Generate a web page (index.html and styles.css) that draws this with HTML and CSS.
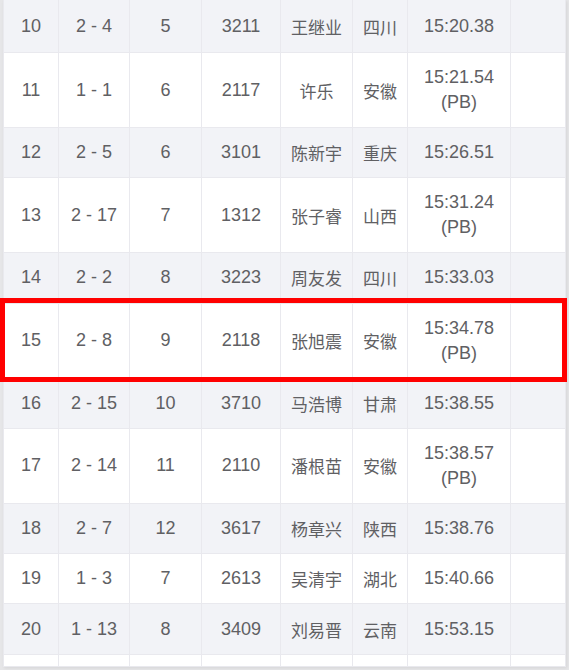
FILE: index.html
```html
<!DOCTYPE html>
<html lang="zh">
<head>
<meta charset="utf-8">
<title>成绩</title>
<link rel="stylesheet" href="styles.css">
</head>
<body>
<div class="page">
  <table class="results">
    <colgroup>
      <col class="c1"><col class="c2"><col class="c3"><col class="c4"><col class="c5"><col class="c6"><col class="c7"><col class="c8">
    </colgroup>
    <tbody>
      <tr class="single top"><td>10</td><td>2 - 4</td><td>5</td><td>3211</td><td>王继业</td><td>四川</td><td>15:20.38</td><td></td></tr>
      <tr class="double"><td>11</td><td>1 - 1</td><td>6</td><td>2117</td><td>许乐</td><td>安徽</td><td>15:21.54<br>(PB)</td><td></td></tr>
      <tr class="single"><td>12</td><td>2 - 5</td><td>6</td><td>3101</td><td>陈新宇</td><td>重庆</td><td>15:26.51</td><td></td></tr>
      <tr class="double"><td>13</td><td>2 - 17</td><td>7</td><td>1312</td><td>张子睿</td><td>山西</td><td>15:31.24<br>(PB)</td><td></td></tr>
      <tr class="single"><td>14</td><td>2 - 2</td><td>8</td><td>3223</td><td>周友发</td><td>四川</td><td>15:33.03</td><td></td></tr>
      <tr class="double hl"><td>15</td><td>2 - 8</td><td>9</td><td>2118</td><td>张旭震</td><td>安徽</td><td>15:34.78<br>(PB)</td><td></td></tr>
      <tr class="single"><td>16</td><td>2 - 15</td><td>10</td><td>3710</td><td>马浩博</td><td>甘肃</td><td>15:38.55</td><td></td></tr>
      <tr class="double"><td>17</td><td>2 - 14</td><td>11</td><td>2110</td><td>潘根苗</td><td>安徽</td><td>15:38.57<br>(PB)</td><td></td></tr>
      <tr class="single"><td>18</td><td>2 - 7</td><td>12</td><td>3617</td><td>杨章兴</td><td>陕西</td><td>15:38.76</td><td></td></tr>
      <tr class="single"><td>19</td><td>1 - 3</td><td>7</td><td>2613</td><td>吴清宇</td><td>湖北</td><td>15:40.66</td><td></td></tr>
      <tr class="single"><td>20</td><td>1 - 13</td><td>8</td><td>3409</td><td>刘易晋</td><td>云南</td><td>15:53.15</td><td></td></tr>
      <tr class="stub"><td></td><td></td><td></td><td></td><td></td><td></td><td></td><td></td></tr>
    </tbody>
  </table>
  <div class="mark"></div>
</div>
</body>
</html>
```

FILE: styles.css
```css
html, body {
  margin: 0;
  padding: 0;
}
body {
  background: #e6e6e8;
  width: 569px;
  height: 670px;
  overflow: hidden;
}
.page {
  position: relative;
  padding: 0 4px 0 3px;
  height: 670px;
  box-sizing: border-box;
}
.results {
  width: 562px;
  border-collapse: collapse;
  table-layout: fixed;
  background: #ffffff;
  font-family: "Liberation Sans", "Noto Sans CJK SC", sans-serif;
  font-size: 18px;
  color: #606063;
  box-shadow: 1px 1px 3px rgba(0,0,0,0.08);
}
.c1 { width: 55px; }
.c2 { width: 71px; }
.c3 { width: 72px; }
.c4 { width: 79px; }
.c5 { width: 72px; }
.c6 { width: 55px; }
.c7 { width: 103px; }
.c8 { width: 55px; }
.results td {
  border: 1px solid #e9e9ee;
  text-align: center;
  vertical-align: middle;
  padding: 0;
  line-height: 25px;
}
.results tr:nth-child(odd) td {
  background: #f2f3f7;
}
.single td { height: 49.3px; }
.double td { height: 74px; }
.top td { height: 52px; border-top: 0; }
.stub td { height: 11px; }
.results td:nth-child(5),
.results td:nth-child(6) {
  font-family: "Noto Sans CJK SC", sans-serif;
  font-size: 17px;
}
.mark {
  position: absolute;
  left: 0;
  top: 298px;
  width: 567px;
  height: 84px;
  border: 5px solid #ff0000;
  box-sizing: border-box;
}
```
